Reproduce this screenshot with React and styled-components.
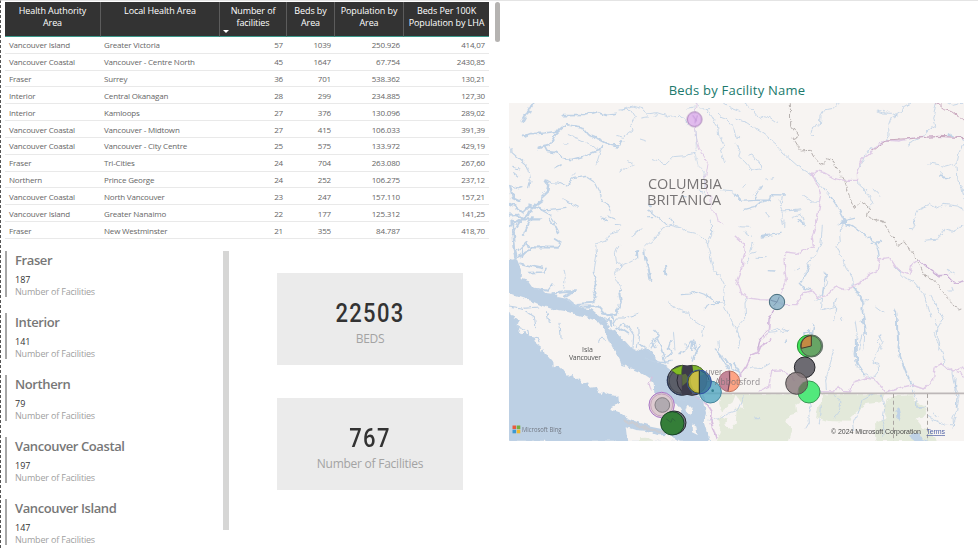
import React from "react";
import styled, { createGlobalStyle } from "styled-components";

const Global = createGlobalStyle`
  * { box-sizing: border-box; }
  body { margin: 0; background: #fff; overflow: hidden; font-family: "Open Sans", "Noto Sans", sans-serif; }
`;

const Page = styled.main`
  width: 978px;
  height: 548px;
  display: grid;
  grid-template-columns: 508px 456px;
  border-top: 1px solid #e4e4e4;
  border-left: 1px dashed #555;
  overflow: hidden;
`;
const LeftPane = styled.section`
  display: grid;
  grid-template-rows: 249px 298px;
`;
const TableArea = styled.div`
  display: flex;
  padding: 1px 0 0 4px;
`;
const Table = styled.table`
  width: 484px;
  height: 237px;
  table-layout: fixed;
  border-collapse: separate;
  border-spacing: 0;
`;
const Th = styled.th`
  position: relative;
  height: 35px;
  padding: 3px 2px 0;
  vertical-align: top;
  background: #333;
  color: #fff;
  font-size: 9px;
  line-height: 12px;
  font-weight: 500;
  letter-spacing: -0.1px;
  border-bottom: 1px solid #3c9a8c;
  border-right: ${(p) => (p.$last ? "0" : "1px solid #5c5c5c")};
`;
const SortMark = styled.i`
  position: absolute;
  left: 3px;
  bottom: 3px;
  border: 3px solid transparent;
  border-top-color: #fff;
  border-bottom: 0;
`;
const Td = styled.td`
  height: 16.83px;
  padding: 0 4px 0 3px;
  font-size: 8px;
  line-height: 15px;
  letter-spacing: -0.18px;
  color: #666;
  white-space: nowrap;
  text-align: ${(p) => (p.$num ? "right" : "left")};
  border-bottom: 1px solid #e9e9e9;
  &:first-child { padding-left: 4px; }
`;
const TableScroll = styled.div`
  width: 5px;
  height: 40px;
  margin-left: 6px;
  border-radius: 3px;
  background: #b5b3b1;
`;
const Lower = styled.div`
  display: grid;
  grid-template-columns: 218px 6px 186px;
  padding-left: 4px;
`;
const CardList = styled.div`
  display: flex;
  flex-direction: column;
  gap: 16px;
  padding-top: 1px;
  overflow: hidden;
`;
const Item = styled.article`
  height: 46px;
  flex: none;
  padding-left: 8px;
  border-left: 2px solid #a6a6a6;
  white-space: nowrap;
`;
const ItemTitle = styled.h3`
  margin: 0;
  font-size: 13px;
  line-height: 19px;
  font-weight: 600;
  letter-spacing: -0.4px;
  color: #777;
`;
const ItemValue = styled.div`
  margin-top: 4px;
  font-size: 9px;
  line-height: 12px;
  color: #333;
`;
const ItemLabel = styled.div`
  font-size: 9px;
  line-height: 12px;
  letter-spacing: -0.18px;
  color: #a0a0a0;
`;
const ListScroll = styled.div`
  height: 279px;
  margin-top: 1px;
  background: #d6d6d5;
`;
const Kpis = styled.div`
  display: flex;
  flex-direction: column;
  gap: 33px;
  margin: 23px 0 0 48px;
  width: 186px;
`;
const Kpi = styled.div`
  height: 92px;
  padding-top: 26px;
  background: #ebebeb;
  text-align: center;
`;
const KpiValue = styled.div`
  font: 500 25px/29px Roboto, sans-serif;
  letter-spacing: 1.5px;
  color: #333;
  transform: scaleX(0.88);
`;
const KpiLabel = styled.div`
  font-size: 12px;
  line-height: 22px;
  letter-spacing: -0.25px;
  color: #a3a3a3;
`;
const MapPanel = styled.section`
  padding-top: 79px;
`;
const MapTitle = styled.h2`
  margin: 0;
  height: 23px;
  font-size: 13px;
  line-height: 20px;
  font-weight: 400;
  letter-spacing: 0.22px;
  text-align: center;
  color: #20796c;
`;
const MapSvg = styled.svg`
  display: block;
  width: 455px;
  height: 338px;
  overflow: hidden;
`;

const heads = [
  ["Health Authority", "Area"],
  ["Local Health Area"],
  ["Number of", "facilities"],
  ["Beds by", "Area"],
  ["Population by", "Area"],
  ["Beds Per 100K", "Population by LHA"],
];
const widths = [96, 119, 67, 48, 69, 85];
const rows = [
  ["Vancouver Island", "Greater Victoria", "57", "1039", "250.926", "414,07"],
  ["Vancouver Coastal", "Vancouver - Centre North", "45", "1647", "67.754", "2430,85"],
  ["Fraser", "Surrey", "36", "701", "538.362", "130,21"],
  ["Interior", "Central Okanagan", "28", "299", "234.885", "127,30"],
  ["Interior", "Kamloops", "27", "376", "130.096", "289,02"],
  ["Vancouver Coastal", "Vancouver - Midtown", "27", "415", "106.033", "391,39"],
  ["Vancouver Coastal", "Vancouver - City Centre", "25", "575", "133.972", "429,19"],
  ["Fraser", "Tri-Cities", "24", "704", "263.080", "267,60"],
  ["Northern", "Prince George", "24", "252", "106.275", "237,12"],
  ["Vancouver Coastal", "North Vancouver", "23", "247", "157.110", "157,21"],
  ["Vancouver Island", "Greater Nanaimo", "22", "177", "125.312", "141,25"],
  ["Fraser", "New Westminster", "21", "355", "84.787", "418,70"],
];
const authorities = [
  ["Fraser", 187],
  ["Interior", 141],
  ["Northern", 79],
  ["Vancouver Coastal", 197],
  ["Vancouver Island", 147],
];

const Tile = styled.g`
  fill: none;
  stroke-linejoin: round;
  stroke-linecap: round;
`;
const Water = styled.path`
  stroke: #bfd2e6;
  stroke-width: ${(p) => (p.$w || 3) * 0.85};
`;
const Road = styled.path`
  stroke: ${(p) => p.$c || "#dfcbe6"};
  stroke-width: ${(p) => p.$w || 4};
`;
const Border = styled.path`
  stroke: #b5afad;
  stroke-width: 3;
  stroke-dasharray: 12 7;
`;
const MapText = styled.text`
  font-family: "Open Sans", "Noto Sans", sans-serif;
  font-size: ${(p) => p.$s}px;
  fill: ${(p) => p.$c};
`;
const Credit = styled(MapText)`
  font-family: "Liberation Sans", Arial, sans-serif;
`;
const Bubble = styled.circle`
  stroke-width: 3;
`;

/* Map tiles are drawn at three units per pixel, each in its own local frame. */
const frame = (x, y) => `translate(${x} ${y}) scale(.33333)`;

function Coast() {
  return (
    <Tile transform={frame(505, 220)}>
      <path fill="#bdd0e4" d="M0 115L25 119L35 116L43 135L48 150L47 176L72 184L84 201L110 210L121 219L150 222L158 231L184 236L192 247L214 252L229 264L260 268L281 286L303 300L316 326L340 342L354 356L381 386L405 393L424 382L443 398L459 427L484 440L505 456L525 485L555 507L577 520L586 538L598 547L602 578L596 606L614 665L0 665Z" />
      <path fill="#f7f4f2" d="M0 216L39 230L80 243L111 257L144 268L176 272L207 281L248 292L278 304L294 323L302 342L313 365L321 382L334 400L346 424L349 438L376 445L405 457L432 475L446 492L448 519L461 542L491 562L504 588L509 610L499 622L470 624L430 616L397 606L367 594L343 577L316 567L319 561L342 549L340 528L311 524L291 515L287 526L272 501L256 503L249 487L235 490L218 473L205 474L200 462L188 467L176 454L169 444L158 436L143 439L142 425L130 411L119 405L116 388L106 392L103 378L86 364L83 350L66 342L58 333L49 340L40 334L45 320L34 316L42 302L27 292L14 288L10 274L0 270Z" />
      <path fill="#f7f4f2" d="M365 622L391 630L420 632L460 646L493 645L525 665L370 665Z" />
      <path fill="#e3e9da" d="M405 655L420 653L436 660L450 665L405 665Z" />
      <path fill="#f7f4f2" d="M497 547l20 8 12 18-5 20-15-7-9-18zM548 552l15 14-4 20-18-12zM560 610l14 10 4 25-17-8z" />
      <path stroke="#d0c9ca" strokeWidth="9" opacity=".65" d="M360 600C405 621 430 628 475 637" />
      <Water $w={9} d="M35 116C24 78 31 62 24 25L23 0" />
      <Water $w={7} d="M40 110L74 93L81 82L162 83" />
      <Water $w={6} d="M23 43L47 0M56 45L74 5L81 -9M52 75L49 114M38 92L65 65L71 82M45 130L78 138L112 145M72 158L118 156L123 145M134 -4L152 22L161 40M149 60L165 70L161 83" />
      <Water $w={7} d="M214 252L264 248L272 231L266 212L276 192L271 170L266 157M142 220L178 217L210 216M179 230L210 210M92 207L130 212L143 194M184 236L213 260L280 259L305 286L334 281L348 246L343 220L352 211" />
      <Water $w={3} d="M266 157L275 108L272 70L302 60L314 40L341 32M177 151L181 170L177 205M341 76L331 101L334 124L349 137L328 160L334 181L352 211M349 137L374 127L395 116L398 91L392 107M380 48L410 24M386 40L404 27M422 80L455 49L473 24L498 13L530 22L546 35L580 42L608 72L620 46L619 0M608 72L625 145L645 170L658 196L655 250L687 320L703 350M487 246L520 269L545 276L566 303L594 320L589 349M540 370L544 381M505 332L510 390" />
      <Water $w={7} d="M418 91L420 113L431 145L436 180M480 135L484 167M396 94L397 112" />
      <Water $w={4} d="M598 270L610 251L645 250M529 224L553 222L572 214L604 225L628 243L650 249M320 312L334 294L359 294L385 286L401 280M330 329L355 310L372 324L386 345L384 384M401 319L403 352L397 382M433 378L446 360L463 346L446 327M438 386L462 348M62 276L88 293L92 320M124 275L133 307M165 307L168 353M12 258L56 265L101 261M30 313L69 332L72 350L98 353L105 368M281 367L288 355L298 358" />
      <Water $w={6} d="M278 302L315 296L319 320M291 281L322 288L329 319M330 330L350 325L370 338" />
    </Tile>
  );
}

function Northwest() {
  return (
    <Tile transform={frame(505, 75)}>
      <Water $w={6} d="M52 141L79 91L90 84M60 119L78 110M54 185L77 176L119 174L162 168L184 149L230 156L248 179L281 192L316 210L337 216L353 198M316 210L345 209M100 220L132 211L152 178L162 168M118 214L126 229L155 233L174 251L202 254L231 246L281 226L289 215M175 122L235 121L273 111L304 121L333 118M151 276L168 267" />
      <Water d="M190 179L221 191L245 202L264 216L277 227M287 224L282 242L274 268M176 207L189 206M339 105L375 103L391 127L378 150L384 165L355 187L335 181M348 106L384 93L415 102L426 117L456 113L491 124L522 121L551 145M407 129L428 126M448 124L459 119M405 192L425 198M344 291L383 267M371 260L384 267M202 304L211 294M442 251L466 260L480 270L506 245L540 242L567 235M551 145L547 152M549 100L568 96M574 83L584 102L611 101M605 101L620 124L637 150L641 180L658 209L645 220L658 263M637 118L648 127L666 134L686 157L692 186L704 188M652 79L676 98L705 109M648 347L679 350L704 377" />
      <Water $w={4} d="M12 217L20 219L21 233L43 252L65 271L72 288L76 311L71 338M26 277L42 282M26 293L41 306M12 331L38 339L51 335M125 315L140 324L162 324L182 333L207 311L241 304L271 323L285 350L292 378L306 382L316 410M174 371L205 389L220 397M308 423L331 432M334 449L347 450M431 405L462 430L485 449M430 387L437 400M431 425L440 425M493 430L506 447M528 361L543 363M580 348L593 351" />
      <Water $w={8} d="M121 316L130 329L126 350L109 366L108 380L80 400L72 420L31 445L5 458M16 337L24 370L43 379M8 383L26 392L49 410M109 405L72 392L50 414M289 431L306 435M10 420L34 417L52 433L109 433" />
      <Water $w={4} d="M109 405L136 420L154 446M108 405L130 407L183 400" />
      <Road $w={3} d="M574 83L568 130L576 196L590 238L609 266L605 292L599 316L608 356L618 370L618 401L633 414L640 438L655 449" />
      <Water $w={2} d="M573 166L577 214L570 235L580 272L600 295L598 365" />
    </Tile>
  );
}

function Northeast() {
  return (
    <Tile transform={frame(735, 75)}>
      <Water d="M25 83L52 105L72 130L93 122L124 144L134 137M0 132L38 145L90 179L125 209L144 234L185 270L229 299M0 204L15 232L11 244L29 260L52 286L78 281L80 273L51 237L39 241M309 85L291 103L266 108L255 123L253 148L231 164L228 174L236 185M527 83L503 97L497 112L469 129L461 151L462 181L450 199L391 232L385 257L373 278M426 108L444 114L470 115L488 123M442 106L456 112M603 84L598 111L593 127L599 154L580 164L560 186L522 204L519 212M637 83L653 91L680 85M579 263L612 269L632 276L665 266L672 233L687 203L681 184M666 275L669 317L681 340L687 371M687 405L667 393L625 388L605 399L584 388L550 402L536 433L543 449M611 302L641 309M617 293L630 311M413 338L434 361M371 318L372 329L391 345L401 364L411 385L403 393M92 315L116 311M75 338L56 357M24 337L31 328" />
      <Water $w={5} d="M0 358L18 379L60 376L102 376L107 359L151 360M58 376L82 333M27 403L60 395L75 383L107 374M641 175L655 183M286 363L304 390L329 437L358 430M615 304L643 309M324 442L310 449" />
      <Water $w={3} d="M229 299L286 363M132 377L143 403L140 421L145 449M137 391L143 360M141 408L166 406L195 401M162 407L196 405M92 413L103 425M202 360L233 381L253 382M171 429L198 418L208 449" />
      <path fill="#bfd2e6" d="M640 171L657 184L637 182ZM320 437L329 430L338 447L318 446Z" />
      <Road d="M231 299L244 288L265 292L299 310L329 316L368 316L367 292L381 253L405 236L419 217L455 195L491 198L536 189L612 184L687 188M229 299L249 330L260 360L251 408L239 449" />
      <Road $c="#c9a8be" $w={3} d="M604 83L625 100L650 107L687 135M414 225L455 195L534 190L611 184L687 188" />
      <Border d="M166 83L167 151L190 184L174 190L197 228L226 226L240 254L270 270L270 250L291 257L316 295L329 316L345 370L358 397L378 380L403 399L398 423L420 438L448 439" />
    </Tile>
  );
}

function East() {
  return (
    <Tile transform={frame(735, 220)}>
      <Water $w={3} d="M15 20L42 22M27 36L49 50M56 67L49 78L42 102L64 96M42 116L35 130M63 112L91 113M150 0L149 22M262 16L258 67L244 101L219 130L221 143L206 159M327 8L313 30L316 65L306 80L321 116L334 143L352 169L355 197L370 227L387 251L380 269L390 315L387 390M422 259L447 278M180 153L194 145M270 156L278 185L262 220L246 228M239 243L263 234L258 271L295 260L305 235M319 289L323 302M296 299L303 263M301 269L302 252M110 331L127 325L139 335L163 331M37 235L30 249L32 295L13 316L6 330L16 355L10 382M390 243L403 238M432 346L443 365L437 387M370 390L381 344M482 144L510 173L535 184L566 220L577 252L588 291M588 226L603 253L624 296L608 324L607 349L614 369L611 390M521 28L535 29L541 16L538 0M570 61L610 57L629 25L655 35L687 15M658 158L637 148L642 160M651 202L654 213L641 213" />
      <Water $w={5} d="M76 50L138 40M76 51L101 49M97 152L120 153M193 190L207 205L225 209M197 185L213 163L224 135M263 223L269 178L274 160M354 198L384 244L383 277L391 330M479 263L485 280L486 324L490 355L492 390M327 7L351 18L389 45L420 65L430 93L433 114M409 67L440 64M482 144L492 154M321 7L335 4M225 390L237 312M209 342L228 337M189 0L206 14M228 341L217 329M421 74L439 60" />
      <Road d="M239 0L240 24L231 49L235 77L213 88L188 100L153 96L147 114L150 155L154 180L142 213L139 224M0 48L28 73L31 95L23 118L23 138L5 183L21 222L42 234L76 239L112 240L126 246L149 253L184 254L208 218L231 213L246 232L276 227L302 198L330 209L355 200L373 192L402 163L427 152L433 117L464 112L487 148L523 162L532 132L552 119L578 143L611 166L635 165L658 190L687 183M124 256L102 296L100 325L77 353L68 390" />
      <Road $c="#c7add2" $w={3} d="M552 119L578 143L611 168L634 166L659 190L687 182M125 256L103 294L101 325L78 353L68 390" />
      <Border d="M416 0L442 3L464 36L492 76L507 65L539 108L552 131L570 169L600 184L625 217L660 258L670 270L687 266" />
      <ellipse cx="152" cy="361" rx="4" ry="6" fill="#bfd2e6" />
    </Tile>
  );
}

function South() {
  return (
    <>
      <Tile transform={frame(640, 340)}>
        <path fill="#e3e9da" d="M243 162L389 162L389 229L369 246L387 263L389 310L228 310L244 270L232 239L248 219L237 190Z" />
        <path fill="#f7f4f2" d="M287 164L315 207L290 204L287 251L270 268L253 255L260 239L244 230L250 207L278 187Z" />
        <Water $w={5} d="M93 0L85 24L94 40L77 54M155 4L140 26L120 41M161 0L167 31L157 63M180 14L167 40M52 0L65 29L75 68M0 14L19 30L44 52M36 0L49 24M67 67L96 64M16 57L72 69M238 45L253 67L267 90M226 30L246 48M159 3L155 28M281 69L300 99M256 56L278 89L294 95" />
        <Water d="M234 4L236 35L253 58L277 82L298 101M178 177L199 223M207 240L239 236L263 220L293 210L310 170M324 82L364 86L389 71M345 236L389 237M203 286L217 309M110 184L124 179L140 184M344 234L361 233" />
        <Road $w={5} $c="#d8bedf" d="M389 0L362 20L355 36L335 44L319 78L303 101L293 113M181 144L187 174L216 219L213 247L228 295" />
        <Road $w={3} $c="#d8bedf" d="M38 110L27 130L33 151M66 149L79 168M161 164L178 178" />
      </Tile>
      <Tile transform={frame(760, 320)}>
        <path fill="#e3e9da" d="M0 223L103 223L133 238L109 253L112 278L86 286L79 305L96 323L84 363L0 363ZM186 223L374 223L367 244L325 248L300 267L276 287L269 305L202 303L165 291L171 265L183 248ZM345 310L380 294L367 265L381 236L408 225L460 223L462 244L491 254L503 271L489 290L464 294L487 324L503 326L524 348L530 363L350 363Z" />
        <path fill="#f7f4f2" d="M119 226L159 227L170 261L145 292L146 315L116 298L134 283ZM305 268L333 250L356 252L342 281L349 313L316 324L301 351L276 331Z" />
        <Water d="M27 37L49 35L65 23L83 35M220 90L210 137L197 180L199 209M285 0L292 46L285 102L292 144L321 166L343 180M360 48L348 61L361 79L346 108L339 127L354 134L356 153L342 171M150 245L154 260L146 279L148 307L138 324M184 260L182 289L177 310M226 230L243 242L238 276L223 294M340 223L307 241L296 273L278 312L281 332M364 225L372 258L367 295L374 320L371 352M457 213L471 243L470 266L499 263M524 0L532 22L524 45L547 99L555 134L579 160L589 208L597 226L590 273L579 295L581 318L553 315L505 290M588 289L578 321M522 278L531 290M468 246L471 262L494 264" />
        <Water $w={6} d="M304 0L316 21L318 40M411 0L412 31L414 65L412 82L425 122L440 161L459 199M287 61L289 124L315 164M410 275L420 282M455 345L475 348L485 358" />
        <Water $w={4} d="M588 178L585 211L591 228L589 265" />
        <path fill="#bfd2e6" d="M412 260l8 6 4 20-6 18-6-8zM447 350l15-12 16 2 10 17 18 6h-42z" />
        <Road d="M0 213L26 202L35 151L61 150L84 163L104 183M164 215L225 216L236 197L244 214L271 216L281 186L317 174L344 178L377 216L408 206L456 195L490 207L521 178L525 144L544 130L580 156L611 141M592 158L613 168" />
        <Road d="M29 0L25 41L3 59" />
      </Tile>
    </>
  );
}

function ParallelBorder() {
  return (
    <Tile>
      <path d="M701 393.3H964" stroke="#bdb7b8" strokeWidth="1.7" />
      <path stroke="#aaa5a2" strokeDasharray="4 2.7" strokeLinecap="butt" d="M893.5 394V441M927.5 394V441" />
    </Tile>
  );
}

function Bubbles() {
  return (
    <>
      <g transform={frame(505, 75)}>
        <Bubble cx="568.5" cy="133" r="22" fill="#ddb0ec" fillOpacity=".85" stroke="#a27bb3" />
        <path d="M562 120L575 139M570 144L577 121" stroke="#b789ce" fill="none" strokeWidth="2" />
      </g>
      <g transform={frame(735, 220)}>
        <Bubble cx="126" cy="246" r="23" fill="#85afc5" fillOpacity=".82" stroke="#456b7b" />
        <path d="M108 241L126 246L133 230M126 246L116 257" stroke="#7895ae" fill="none" strokeWidth="3" />
      </g>
      <g transform={frame(640, 340)}>
        <Bubble cx="65" cy="195" r="38" fill="#dec5d5" fillOpacity=".83" stroke="#a875c5" />
        <Bubble cx="65" cy="195" r="33" fill="#ddcbd0" stroke="#c4a4ba" />
        <Bubble cx="67" cy="195" r="22" fill="#b1aab0" stroke="#817c81" />
        <Bubble cx="103" cy="248" r="35" fill="#777383" stroke="#25252c" />
        <Bubble cx="97" cy="250" r="35" fill="#347e38" stroke="#174625" />
        <path d="M79 237l14 10 4-12 9 8" fill="none" stroke="#2c6937" strokeWidth="3" />
        <Bubble cx="211" cy="156" r="33" fill="#52a7c2" fillOpacity=".8" stroke="#44849b" />
        <circle cx="218" cy="152" r="4" fill="#347d91" />
        <Bubble cx="127" cy="121" r="45" fill="#62666f" stroke="#292c35" />
        <path d="M84 108A43 43 0 0 0 124 165" fill="none" stroke="#2c3a5c" strokeWidth="3" />
        <path d="M90 110A37 37 0 0 0 124 160V104L98 97Z" fill="#5b5e68" stroke="#343846" strokeWidth="2" />
        <Bubble cx="156" cy="121" r="45" fill="#5c5864" stroke="#292a34" />
        <path d="M156 121V76A45 45 0 0 1 196 101Z" fill="#80b52f" stroke="#486823" strokeWidth="2" />
        <path d="M126 77H157L160 98L151 118L156 163L125 165Z" fill="#3d3b4a" />
        <path d="M94 90L127 76L124 104L110 103Z" fill="#82bd24" stroke="#456a20" strokeWidth="2" />
        <path d="M126 104L137 101L149 119L127 138Z" fill="#5b6a40" />
        <Bubble cx="178" cy="126" r="36" fill="#3c7798" fillOpacity=".9" stroke="#314fa6" />
        <path d="M178 126V92A34 34 0 0 0 178 160Z" fill="#b9b43d" stroke="#4b5029" strokeWidth="3" />
        <path d="M158 99L178 93V158L160 147C150 130 150 112 158 99Z" fill="#d0c348" fillOpacity=".72" />
        <path d="M178 92V161" stroke="#202b2d" strokeWidth="3" />
        <path d="M184 94A34 34 0 0 1 207 121" fill="none" stroke="#204975" strokeWidth="2" />
        <Bubble cx="268" cy="124" r="31" fill="#ff9874" fillOpacity=".88" stroke="#be735d" />
        <path d="M270 124V94A30 30 0 1 0 264 154Z" fill="#bc819c" fillOpacity=".86" stroke="#9e7089" strokeWidth="2" />
        <path d="M268 94L269 123L264 153" stroke="#75424e" strokeWidth="3" fill="none" />
        <MapText $s={25} $c="#858184" x="197" y="105" textLength="50" lengthAdjust="spacingAndGlyphs">uver</MapText>
        <MapText $s={25} $c="#757176" fillOpacity=".8" x="225" y="136" textLength="135">Abbotsford</MapText>
      </g>
      <g transform={frame(760, 320)}>
        <Bubble cx="145" cy="78" r="33" fill="#40e457" stroke="#238b30" />
        <Bubble cx="155" cy="78" r="33" fill="#84928d" stroke="#5f6e63" />
        <Bubble cx="153" cy="78" r="31" fill="#67a565" stroke="#496d49" />
        <path d="M154 78V47A31 31 0 0 0 124 85Z" fill="#c38a43" stroke="#44382c" strokeWidth="3" />
        <Bubble cx="147" cy="216" r="33" fill="#52e97c" stroke="#389553" />
        <Bubble cx="134" cy="142" r="31" fill="#65636a" fillOpacity=".95" stroke="#222228" />
        <Bubble cx="110" cy="190" r="33" fill="#8d7e81" fillOpacity=".86" stroke="#4d4a4b" />
        <path d="M116 210A33 33 0 0 1 142 184A33 33 0 0 1 116 222Z" fill="#587a4d" fillOpacity=".65" />
      </g>
    </>
  );
}

function FacilityMap() {
  return (
    <MapSvg viewBox="509 103 455 338" role="img" aria-label="Beds by Facility Name">
      <defs>
        <filter id="natural-edge" filterUnits="userSpaceOnUse" x="500" y="95" width="475" height="355" colorInterpolationFilters="sRGB">
          <feTurbulence type="fractalNoise" baseFrequency="0.16" numOctaves="2" seed="4" result="noise" />
          <feDisplacementMap in="SourceGraphic" in2="noise" scale="5" xChannelSelector="R" yChannelSelector="G" />
        </filter>
      </defs>
      <rect x="509" y="103" width="455" height="338" fill="#f7f4f2" />
      <g filter="url(#natural-edge)">
        <Coast />
        <Northwest />
        <Northeast />
        <East />
        <South />
      </g>
      <ParallelBorder />
      <MapText $s={15} $c="#777475">
        <tspan x="648" y="189" textLength="74" lengthAdjust="spacingAndGlyphs">COLUMBIA</tspan>
        <tspan x="647" y="205" textLength="74" lengthAdjust="spacingAndGlyphs">BRITÁNICA</tspan>
      </MapText>
      <MapText $s={7} $c="#555" x="582" y="352" textLength="11">Isla</MapText>
      <MapText $s={7} $c="#555" x="569" y="360" textLength="32">Vancouver</MapText>
      <Bubbles />
      <path fill="#ea5a3d" d="M512.5 425.5h3.6v3.6h-3.6z" />
      <path fill="#76ad3e" d="M516.7 425.5h3.6v3.6h-3.6z" />
      <path fill="#3c99d2" d="M512.5 429.7h3.6v3.6h-3.6z" />
      <path fill="#eeb82f" d="M516.7 429.7h3.6v3.6h-3.6z" />
      <MapText $s={7} $c="#737984" x="522" y="432" textLength="39.5" lengthAdjust="spacingAndGlyphs">Microsoft Bing</MapText>
      <Credit $s={7} $c="#4b4b4b" x="831" y="434" textLength="90">© 2024 Microsoft Corporation</Credit>
      <Credit $s={7} $c="#5263a8" x="926.5" y="434" textLength="18.5" textDecoration="underline">Terms</Credit>
    </MapSvg>
  );
}

export default function App() {
  return (
    <>
      <Global />
      <Page>
        <LeftPane>
          <TableArea>
            <Table>
              <colgroup>{widths.map((w, i) => <col key={i} width={w} />)}</colgroup>
              <thead>
                <tr>
                  {heads.map((lines, i) => (
                    <Th key={i} $last={i === 5}>
                      {lines.map((l) => <div key={l}>{l}</div>)}
                      {i === 2 && <SortMark />}
                    </Th>
                  ))}
                </tr>
              </thead>
              <tbody>
                {rows.map((r, i) => (
                  <tr key={i}>{r.map((c, j) => <Td key={j} $num={j > 1}>{c}</Td>)}</tr>
                ))}
              </tbody>
            </Table>
            <TableScroll />
          </TableArea>
          <Lower>
            <CardList>
              {authorities.map(([name, n]) => (
                <Item key={name}>
                  <ItemTitle>{name}</ItemTitle>
                  <ItemValue>{n}</ItemValue>
                  <ItemLabel>Number of Facilities</ItemLabel>
                </Item>
              ))}
            </CardList>
            <ListScroll />
            <Kpis>
              <Kpi>
                <KpiValue>22503</KpiValue>
                <KpiLabel>BEDS</KpiLabel>
              </Kpi>
              <Kpi>
                <KpiValue>767</KpiValue>
                <KpiLabel>Number of Facilities</KpiLabel>
              </Kpi>
            </Kpis>
          </Lower>
        </LeftPane>
        <MapPanel>
          <MapTitle>Beds by Facility Name</MapTitle>
          <FacilityMap />
        </MapPanel>
      </Page>
    </>
  );
}
